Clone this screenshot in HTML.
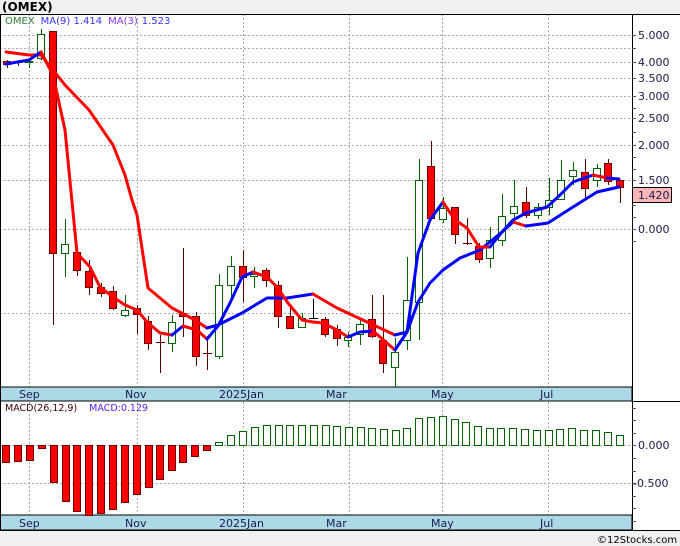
<!DOCTYPE html>
<html><head><meta charset="utf-8"><style>
html,body{margin:0;padding:0;width:680px;height:546px;overflow:hidden;background:#f0f0f0;font-family:"Liberation Sans","DejaVu Sans",sans-serif}
svg{display:block}
</style></head><body>
<svg width="680" height="546" viewBox="0 0 680 546" xmlns="http://www.w3.org/2000/svg" font-family="'DejaVu Sans','Liberation Sans',sans-serif">
<rect x="0" y="0" width="680" height="546" fill="#f0f0f0"/>
<text x="2" y="11" font-size="12" font-weight="bold" fill="#000">(OMEX)</text>
<!-- panels -->
<rect x="0" y="14" width="680" height="516" fill="#fff"/>
<g stroke="#aaa" stroke-dasharray="2,2" stroke-width="1">
<line x1="0" y1="35.5" x2="632" y2="35.5"/><line x1="0" y1="48.5" x2="632" y2="48.5"/><line x1="0" y1="62.5" x2="632" y2="62.5"/><line x1="0" y1="78.5" x2="632" y2="78.5"/><line x1="0" y1="96.5" x2="632" y2="96.5"/><line x1="0" y1="118.5" x2="632" y2="118.5"/><line x1="0" y1="145.5" x2="632" y2="145.5"/><line x1="0" y1="180.5" x2="632" y2="180.5"/><line x1="0" y1="229.5" x2="632" y2="229.5"/><line x1="0" y1="313.5" x2="632" y2="313.5"/>
<line x1="0" y1="445.5" x2="632" y2="445.5"/><line x1="0" y1="483.5" x2="632" y2="483.5"/>
<line x1="29.5" y1="14" x2="29.5" y2="530"/><line x1="137.5" y1="14" x2="137.5" y2="530"/><line x1="243.5" y1="14" x2="243.5" y2="530"/><line x1="349.5" y1="14" x2="349.5" y2="530"/><line x1="442.5" y1="14" x2="442.5" y2="530"/><line x1="548.5" y1="14" x2="548.5" y2="530"/>
</g>
<!-- axis bands -->
<rect x="0" y="387" width="632" height="14" fill="#add8e6" stroke="#000"/>
<rect x="0" y="515" width="632" height="15" fill="#add8e6" stroke="#000"/>
<line x1="0" y1="14.5" x2="680" y2="14.5" stroke="#000"/>
<line x1="0.5" y1="14" x2="0.5" y2="530" stroke="#000"/>
<line x1="632.5" y1="14" x2="632.5" y2="530" stroke="#000"/>
<line x1="632" y1="401.5" x2="680" y2="401.5" stroke="#000"/>
<line x1="0" y1="530.5" x2="680" y2="530.5" stroke="#000"/>
<g font-size="11" fill="#1a1a50">
<text x="19" y="398">Sep</text><text x="125" y="398">Nov</text><text x="219" y="398">2025Jan</text><text x="326" y="398">Mar</text><text x="431" y="398">May</text><text x="540" y="398">Jul</text>
<text x="19" y="527">Sep</text><text x="125" y="527">Nov</text><text x="219" y="527">2025Jan</text><text x="326" y="527">Mar</text><text x="431" y="527">May</text><text x="540" y="527">Jul</text>
</g>
<!-- right axis -->
<g stroke="#555"><line x1="632" y1="35.5" x2="636" y2="35.5"/><line x1="632" y1="48.5" x2="636" y2="48.5"/><line x1="632" y1="62.5" x2="636" y2="62.5"/><line x1="632" y1="78.5" x2="636" y2="78.5"/><line x1="632" y1="96.5" x2="636" y2="96.5"/><line x1="632" y1="108.5" x2="636" y2="108.5"/><line x1="632" y1="118.5" x2="636" y2="118.5"/><line x1="632" y1="132.5" x2="636" y2="132.5"/><line x1="632" y1="145.5" x2="636" y2="145.5"/><line x1="632" y1="157.5" x2="636" y2="157.5"/><line x1="632" y1="169.5" x2="636" y2="169.5"/><line x1="632" y1="180.5" x2="636" y2="180.5"/><line x1="632" y1="205.5" x2="636" y2="205.5"/><line x1="632" y1="217.5" x2="636" y2="217.5"/><line x1="632" y1="229.5" x2="636" y2="229.5"/><line x1="632" y1="241.5" x2="636" y2="241.5"/>
<line x1="632" y1="408.5" x2="636" y2="408.5"/><line x1="632" y1="420.5" x2="636" y2="420.5"/><line x1="632" y1="433.5" x2="636" y2="433.5"/><line x1="632" y1="445.5" x2="636" y2="445.5"/><line x1="632" y1="458.5" x2="636" y2="458.5"/><line x1="632" y1="471.5" x2="636" y2="471.5"/><line x1="632" y1="483.5" x2="636" y2="483.5"/><line x1="632" y1="496.5" x2="636" y2="496.5"/><line x1="632" y1="508.5" x2="636" y2="508.5"/><line x1="632" y1="521.5" x2="636" y2="521.5"/></g>
<g font-size="11" fill="#1a1a50">
<text x="638" y="39">5.000</text><text x="638" y="66">4.000</text><text x="638" y="82">3.500</text><text x="638" y="100">3.000</text><text x="638" y="122">2.500</text><text x="638" y="149">2.000</text><text x="638" y="184">1.500</text><text x="638" y="233">0.000</text>
<text x="638" y="449">0.000</text><text x="633" y="487">-0.500</text>
</g>
<rect x="632.5" y="187.5" width="39" height="15" fill="#ffb6b6" stroke="#000"/>
<text x="638" y="199" font-size="11" fill="#1a1a50">1.420</text>
<!-- legend -->
<text x="5" y="24" font-size="10"><tspan fill="#2e7d32">OMEX</tspan><tspan fill="#3333ff" dx="6">MA(9)  1.414</tspan><tspan fill="#8833ff" dx="6">MA(3)</tspan><tspan fill="#3333ff" dx="4">1.523</tspan></text>
<text x="5" y="411" font-size="9.5"><tspan fill="#400000">MACD(26,12,9)</tspan><tspan fill="#5522ff" dx="12">MACD:0.129</tspan></text>
<!-- candles -->
<g id="c" stroke-width="1">
</g>
<g stroke-width="1">
<g stroke="#600000"><line x1="7.5" y1="60" x2="7.5" y2="68"/><line x1="18.5" y1="61" x2="18.5" y2="66"/><line x1="53.5" y1="31" x2="53.5" y2="325"/><line x1="77.5" y1="252" x2="77.5" y2="276"/><line x1="89.5" y1="260" x2="89.5" y2="295"/><line x1="101.5" y1="283" x2="101.5" y2="297"/><line x1="113.5" y1="286" x2="113.5" y2="310"/><line x1="137.5" y1="305" x2="137.5" y2="334"/><line x1="148.5" y1="316" x2="148.5" y2="350"/><line x1="160.5" y1="335" x2="160.5" y2="373"/><line x1="183.5" y1="248" x2="183.5" y2="337"/><line x1="196.5" y1="312" x2="196.5" y2="366"/><line x1="207.5" y1="340" x2="207.5" y2="370"/><line x1="243.5" y1="250" x2="243.5" y2="302"/><line x1="266.5" y1="268" x2="266.5" y2="287"/><line x1="278.5" y1="281" x2="278.5" y2="328"/><line x1="290.5" y1="305" x2="290.5" y2="329"/><line x1="325.5" y1="317" x2="325.5" y2="337"/><line x1="337.5" y1="325" x2="337.5" y2="346"/><line x1="372.5" y1="295" x2="372.5" y2="338"/><line x1="383.5" y1="295" x2="383.5" y2="373"/><line x1="431.5" y1="141" x2="431.5" y2="219"/><line x1="455.5" y1="207" x2="455.5" y2="244"/><line x1="467.5" y1="218" x2="467.5" y2="245"/><line x1="479.5" y1="243" x2="479.5" y2="263"/><line x1="526.5" y1="187" x2="526.5" y2="218"/><line x1="585.5" y1="159" x2="585.5" y2="200"/><line x1="608.5" y1="159" x2="608.5" y2="185"/><line x1="620.5" y1="180" x2="620.5" y2="203"/></g>
<g stroke="#006400"><line x1="29.5" y1="58" x2="29.5" y2="68"/><line x1="41.5" y1="29" x2="41.5" y2="60"/><line x1="65.5" y1="219" x2="65.5" y2="277"/><line x1="125.5" y1="295" x2="125.5" y2="317"/><line x1="172.5" y1="315" x2="172.5" y2="352"/><line x1="219.5" y1="274" x2="219.5" y2="359"/><line x1="231.5" y1="256" x2="231.5" y2="300"/><line x1="254.5" y1="267" x2="254.5" y2="288"/><line x1="302.5" y1="313" x2="302.5" y2="327"/><line x1="348.5" y1="332" x2="348.5" y2="347"/><line x1="360.5" y1="318" x2="360.5" y2="345"/><line x1="395.5" y1="338" x2="395.5" y2="387"/><line x1="407.5" y1="257" x2="407.5" y2="350"/><line x1="419.5" y1="159" x2="419.5" y2="340"/><line x1="443.5" y1="197" x2="443.5" y2="223"/><line x1="490.5" y1="227" x2="490.5" y2="268"/><line x1="502.5" y1="194" x2="502.5" y2="246"/><line x1="514.5" y1="180" x2="514.5" y2="218"/><line x1="538.5" y1="203" x2="538.5" y2="219"/><line x1="549.5" y1="178" x2="549.5" y2="215"/><line x1="561.5" y1="160" x2="561.5" y2="200"/><line x1="573.5" y1="162" x2="573.5" y2="185"/><line x1="597.5" y1="164" x2="597.5" y2="187"/></g>
<line x1="313.5" y1="299" x2="313.5" y2="318" stroke="#000"/><line x1="309" y1="318.5" x2="318" y2="318.5" stroke="#000"/>
<g fill="#ff0000" stroke="#700000"><rect x="3.5" y="61.5" width="7" height="3"/><rect x="49.5" y="31.5" width="7" height="222"/><rect x="73.5" y="252.5" width="7" height="18"/><rect x="85.5" y="271.5" width="7" height="16"/><rect x="97.5" y="287.5" width="7" height="6"/><rect x="109.5" y="291.5" width="7" height="17"/><rect x="133.5" y="308.5" width="7" height="6"/><rect x="144.5" y="321.5" width="7" height="22"/><rect x="179.5" y="313.5" width="7" height="3"/><rect x="192.5" y="316.5" width="7" height="40"/><rect x="239.5" y="266.5" width="7" height="11"/><rect x="262.5" y="270.5" width="7" height="10"/><rect x="274.5" y="285.5" width="7" height="31"/><rect x="286.5" y="316.5" width="7" height="12"/><rect x="321.5" y="319.5" width="7" height="15"/><rect x="333.5" y="329.5" width="7" height="9"/><rect x="368.5" y="319.5" width="7" height="17"/><rect x="379.5" y="340.5" width="7" height="23"/><rect x="427.5" y="166.5" width="7" height="52"/><rect x="451.5" y="207.5" width="7" height="27"/><rect x="475.5" y="246.5" width="7" height="13"/><rect x="522.5" y="202.5" width="7" height="13"/><rect x="581.5" y="172.5" width="7" height="16"/><rect x="604.5" y="163.5" width="7" height="18"/><rect x="616.5" y="180.5" width="7" height="7"/></g>
<g stroke="#700000"><line x1="14" y1="62.5" x2="22" y2="62.5"/><line x1="156" y1="342.5" x2="165" y2="342.5"/><line x1="203" y1="353.5" x2="212" y2="353.5"/><line x1="463" y1="243.5" x2="472" y2="243.5"/></g>
<g fill="#fff" stroke="#006400"><rect x="25.5" y="61.5" width="7" height="1"/><rect x="37.5" y="34.5" width="7" height="24"/><rect x="61.5" y="244.5" width="7" height="9"/><rect x="121.5" y="310.5" width="7" height="5"/><rect x="168.5" y="322.5" width="7" height="21"/><rect x="215.5" y="285.5" width="7" height="71"/><rect x="227.5" y="266.5" width="7" height="19"/><rect x="250.5" y="274.5" width="7" height="2"/><rect x="298.5" y="318.5" width="7" height="9"/><rect x="344.5" y="337.5" width="7" height="3"/><rect x="356.5" y="324.5" width="7" height="10"/><rect x="391.5" y="352.5" width="7" height="15"/><rect x="403.5" y="300.5" width="7" height="40"/><rect x="415.5" y="180.5" width="7" height="122"/><rect x="439.5" y="208.5" width="7" height="11"/><rect x="486.5" y="240.5" width="7" height="18"/><rect x="498.5" y="216.5" width="7" height="24"/><rect x="510.5" y="206.5" width="7" height="7"/><rect x="534.5" y="207.5" width="7" height="8"/><rect x="545.5" y="200.5" width="7" height="7"/><rect x="557.5" y="180.5" width="7" height="19"/><rect x="569.5" y="170.5" width="7" height="6"/><rect x="593.5" y="168.5" width="7" height="12"/></g>
</g>
<!-- MAs -->
<g fill="none" stroke-width="3" stroke-linejoin="round" stroke-linecap="round">
<polyline stroke="#ff0000" points="6,52 29,55 41,55 53,70 65,85 89,110 113,145 125,175 132,200 137,215 148,288 172,308 195,320 207,328"/>
<polyline stroke="#0000ff" points="207,328 218,325 242,313 267,298 287,298 313,294"/>
<polyline stroke="#ff0000" points="313,294 337,308 395,335"/>
<polyline stroke="#0000ff" points="395,335 407,332 418,302 430,283 443,270 460,258 480,250 502,232 513,222"/>
<polyline stroke="#ff0000" points="513,222 526,226"/>
<polyline stroke="#0000ff" points="526,226 548,223 573,207 597,192 619,187"/>
<polyline stroke="#0000ff" points="6,64 29,60 41,52"/>
<polyline stroke="#ff0000" points="41,52 53,75 65,130 77,253 90,267 100,287 113,297 125,305 137,310 147,322 160,333 172,335"/>
<polyline stroke="#0000ff" points="172,335 183,326"/>
<polyline stroke="#ff0000" points="183,326 197,330 207,339"/>
<polyline stroke="#0000ff" points="207,339 218,326 230,303 242,277 253,272"/>
<polyline stroke="#ff0000" points="253,272 267,277 277,287 288,303 302,320 313,322 323,323 337,330 348,337"/>
<polyline stroke="#0000ff" points="348,337 360,332 373,331"/>
<polyline stroke="#ff0000" points="373,331 395,350"/>
<polyline stroke="#0000ff" points="395,350 407,332 418,253 430,220 443,202"/>
<polyline stroke="#ff0000" points="443,202 455,220 467,228 479,247 490,247"/>
<polyline stroke="#0000ff" points="490,247 502,232 513,220 526,213 547,207 560,195 573,182 593,175"/>
<polyline stroke="#ff0000" points="593,175 607,178"/>
<polyline stroke="#0000ff" points="607,178 619,179"/>
</g>
<!-- MACD -->
<g fill="#ff0000" stroke="#700000"><rect x="2.5" y="445.5" width="7" height="17"/><rect x="14.5" y="445.5" width="7" height="16"/><rect x="26.5" y="445.5" width="7" height="15"/><rect x="38.5" y="445.5" width="7" height="3"/><rect x="50.5" y="445.5" width="7" height="37"/><rect x="62.5" y="445.5" width="7" height="56"/><rect x="73.5" y="445.5" width="7" height="66"/><rect x="85.5" y="445.5" width="7" height="70"/><rect x="97.5" y="445.5" width="7" height="68"/><rect x="109.5" y="445.5" width="7" height="64"/><rect x="121.5" y="445.5" width="7" height="57"/><rect x="133.5" y="445.5" width="7" height="49"/><rect x="145.5" y="445.5" width="7" height="42"/><rect x="156.5" y="445.5" width="7" height="34"/><rect x="168.5" y="445.5" width="7" height="25"/><rect x="179.5" y="445.5" width="7" height="17"/><rect x="191.5" y="445.5" width="7" height="11"/><rect x="203.5" y="445.5" width="7" height="5"/></g>
<g fill="#fff" stroke="#006400"><rect x="215.5" y="442.5" width="7" height="3"/><rect x="227.5" y="435.5" width="7" height="10"/><rect x="239.5" y="431.5" width="7" height="14"/><rect x="251.5" y="427.5" width="7" height="18"/><rect x="263.5" y="425.5" width="7" height="20"/><rect x="275.5" y="425.5" width="7" height="20"/><rect x="286.5" y="425.5" width="7" height="20"/><rect x="298.5" y="425.5" width="7" height="20"/><rect x="310.5" y="425.5" width="7" height="20"/><rect x="322.5" y="425.5" width="7" height="20"/><rect x="333.5" y="426.5" width="7" height="19"/><rect x="345.5" y="427.5" width="7" height="18"/><rect x="357.5" y="427.5" width="7" height="18"/><rect x="368.5" y="428.5" width="7" height="17"/><rect x="380.5" y="429.5" width="7" height="16"/><rect x="392.5" y="430.5" width="7" height="15"/><rect x="403.5" y="428.5" width="7" height="17"/><rect x="415.5" y="418.5" width="7" height="27"/><rect x="427.5" y="417.5" width="7" height="28"/><rect x="439.5" y="416.5" width="7" height="29"/><rect x="451.5" y="419.5" width="7" height="26"/><rect x="462.5" y="422.5" width="7" height="23"/><rect x="474.5" y="426.5" width="7" height="19"/><rect x="486.5" y="428.5" width="7" height="17"/><rect x="497.5" y="428.5" width="7" height="17"/><rect x="509.5" y="428.5" width="7" height="17"/><rect x="521.5" y="429.5" width="7" height="16"/><rect x="533.5" y="430.5" width="7" height="15"/><rect x="545.5" y="430.5" width="7" height="15"/><rect x="556.5" y="429.5" width="7" height="16"/><rect x="568.5" y="428.5" width="7" height="17"/><rect x="580.5" y="430.5" width="7" height="15"/><rect x="592.5" y="430.5" width="7" height="15"/><rect x="604.5" y="432.5" width="7" height="13"/><rect x="616.5" y="435.5" width="7" height="10"/></g>
<text x="597" y="543" font-size="10" fill="#000">©12Stocks.com</text>
</svg>
</body></html>
